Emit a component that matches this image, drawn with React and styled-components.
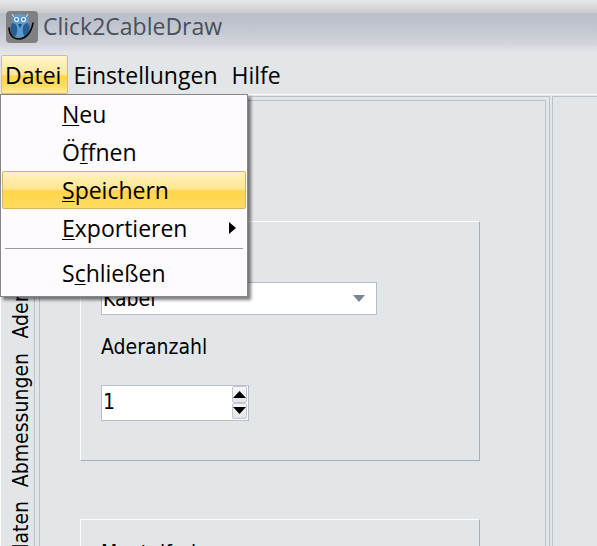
import styled, { createGlobalStyle } from 'styled-components';

const GlobalStyle = createGlobalStyle`
    * {
        box-sizing: border-box;
    }
    body {
        margin: 0;
        background-color: #e2e6e9;
        color: #000;
        overflow: hidden;
    }
    button, input, select {
        font: inherit;
        color: inherit;
    }
`;
const Window = styled.div`
    height: 100vh;
    display: flex;
    flex-direction: column;
    overflow: hidden;
    font-family: "DejaVu Sans Condensed", "DejaVu Sans", sans-serif;
    font-size: 21px;
    line-height: 24px;
`;
const TitleBar = styled.header`
    flex: none;
    height: 55px;
    padding: 0 6px 2px;
    display: flex;
    align-items: center;
    gap: 5px;
    background: linear-gradient(#e6e8e9 0, #c8cacd 13px, #b9bfca 14px, #bec3cd 24px, #d3d6dc 45px, #e2e6e9 52px);
`;
const Title = styled.h1`
    margin: 0;
    padding-bottom: 2px;
    font-family: "Open Sans", "Noto Sans", sans-serif;
    font-size: 23px;
    font-weight: 400;
    line-height: 32px;
    color: #4a505c;
`;
const MenuBar = styled.nav`
    flex: none;
    position: relative;
    display: flex;
    height: 40px;
    padding-left: 1px;
    border-bottom: 1px solid #fbfcfd;
    font-family: "Open Sans", "Noto Sans", sans-serif;
    font-size: 23px;
    font-variant-ligatures: none;
    line-height: 32px;
`;
const MenuButton = styled.button`
    height: 39px;
    padding: 0 8px 0 4px;
    white-space: nowrap;
    border: 1px solid ${props => props.$open ? '#d9bd78' : 'transparent'};
    border-radius: 2px;
    background: ${props => props.$open
        ? 'linear-gradient(#fff5cf, #ffe794 50%, #ffd546 55%, #ffdc62 80%, #ffeb9c)'
        : 'none'};
    &:first-child {
        padding: 0 6px 0 3px;
    }
`;
const Menu = styled.ul`
    position: absolute;
    top: 39px;
    left: 0;
    z-index: 1;
    width: 248px;
    margin: 0;
    padding: 0 1px 4px;
    list-style: none;
    background-color: #fefbff;
    border: 1px solid #86868a;
    box-shadow: 3px 3px 3px rgba(0, 0, 0, 0.5);
`;
const MenuItem = styled.button`
    display: flex;
    align-items: center;
    justify-content: space-between;
    width: 100%;
    height: 38px;
    padding: 0 8px 0 59px;
    text-align: left;
    border: 1px solid ${props => props.$active ? '#d3b368' : 'transparent'};
    border-radius: 2px;
    background: ${props => props.$active
        ? 'linear-gradient(#fff2bd, #ffe691 48%, #ffd54a 52%, #ffdb60)'
        : 'none'};
`;
const Separator = styled.li`
    height: 1px;
    margin: 1px 3px 5px;
    background-color: #9a9a9e;
`;
const Key = styled.span`
    text-decoration: underline;
    text-decoration-thickness: 1px;
    text-underline-offset: 2px;
    text-decoration-skip-ink: none;
`;
const Workspace = styled.main`
    flex: 1;
    min-height: 0;
    display: grid;
    grid-template-columns: 33px minmax(0, 1fr) 45px;
    border-left: 1px solid #fbfcfd;
`;
const Tabs = styled.div`
    display: flex;
    flex-direction: column;
    align-items: center;
    gap: 14px;
    padding: 188px 0 0 6px;
`;
const Tab = styled.button`
    flex: none;
    padding: 0;
    border: none;
    background: none;
    white-space: nowrap;
    writing-mode: vertical-rl;
    transform: rotate(180deg);
`;
const Panel = styled.section`
    margin-top: 1px;
    margin-right: 2px;
    padding: 3px 3px 0 4px;
    border: 1px solid #bbc0c9;
    border-bottom: none;
`;
const Page = styled.div`
    height: 100%;
    padding: 120px 65px 0 40px;
    border: 1px solid #bbc0c9;
    border-bottom: none;
`;
const SidePanel = styled.aside`
    margin-top: 1px;
    border-top: 1px solid #bbc0c9;
    border-left: 1px solid #bbc0c9;
`;
const Group = styled.div`
    display: flex;
    flex-direction: column;
    align-items: flex-start;
    height: 240px;
    margin-bottom: 58px;
    padding: 21px 20px 0;
    border: 1px solid;
    border-color: #fbfcfd #a9aeb5 #a9aeb5 #fbfcfd;
`;
const Label = styled.label`
    min-height: 24px;
    margin-bottom: ${props => props.$gap || 0}px;
`;
const SelectBox = styled.div`
    display: grid;
    align-items: center;
    width: 276px;
    max-width: 100%;
    margin-bottom: 20px;
    & > * {
        grid-area: 1 / 1;
    }
    & > svg {
        justify-self: end;
        margin-right: 12px;
        pointer-events: none;
    }
`;
const Select = styled.select`
    appearance: none;
    width: 100%;
    height: 33px;
    padding: 0 1px;
    border: 1px solid #b7bdc8;
    border-radius: 0;
    background-color: #fff;
`;
const Spinner = styled.div`
    display: flex;
    width: 148px;
    height: 36px;
    padding-right: 1px;
    border: 1px solid #b7bdc8;
    background-color: #fff;
`;
const SpinnerInput = styled.input`
    flex: 1;
    min-width: 0;
    padding: 0 1px 2px;
    border: none;
    background: none;
`;
const Steps = styled.div`
    display: flex;
    flex-direction: column;
    width: 15px;
    padding-bottom: 1px;
`;
const Step = styled.button`
    flex: 1;
    display: flex;
    align-items: center;
    justify-content: center;
    padding: 0;
    border: 1px solid #c3c7cf;
    border-radius: 2px;
    background: linear-gradient(#f4f5f7, #e4e6ea);
`;

const Logo = () => (
    <svg width="32" height="32" viewBox="0 0 32 32" aria-hidden="true">
        <rect width="32" height="32" rx="4" fill="#7f8081" />
        <path d="M6 3l4 1q4-2 8 0l4-1q0 4 0 7l1 4q1 11-9 13q-9-2-8-13l1-4q-1-3-1-7z" fill="#5a9bd0" />
        <path d="M6 12q-4 7 2 14q4-2 3-10q-1-4-5-4zM22 12q4 7-2 14q-4-2-3-10q1-4 5-4z" fill="#285e91" />
        <path d="M6 3l2 3M22 3l-2 3" stroke="#cfe5f3" strokeWidth="1" />
        <circle cx="10.500" cy="8.500" r="1.900" fill="#2f6ea6" stroke="#eaf4fa" strokeWidth="1.300" />
        <circle cx="17.500" cy="8.500" r="1.900" fill="#2f6ea6" stroke="#eaf4fa" strokeWidth="1.300" />
        <path d="M12 13h4l-2 4z" fill="#214e79" />
        <path d="M3 17q1 11 10 11q11-1 14-16" fill="none" stroke="#08090c" strokeWidth="1.600" strokeLinecap="round" />
    </svg>
);

const App = () => {
  return (
    <Window>
        <GlobalStyle />
        <TitleBar>
            <Logo />
            <Title>Click2CableDraw</Title>
        </TitleBar>
        <MenuBar>
            <MenuButton $open>Datei</MenuButton>
            <MenuButton>Einstellungen</MenuButton>
            <MenuButton>Hilfe</MenuButton>
            <Menu>
                <li><MenuItem><span><Key>N</Key>eu</span></MenuItem></li>
                <li><MenuItem><span>Ö<Key>f</Key>fnen</span></MenuItem></li>
                <li><MenuItem $active><span><Key>S</Key>peichern</span></MenuItem></li>
                <li>
                    <MenuItem>
                        <span><Key>E</Key>xportieren</span>
                        <svg width="8" height="14" aria-hidden="true"><path d="M0 1l7 6l-7 6z" /></svg>
                    </MenuItem>
                </li>
                <Separator role="separator" />
                <li><MenuItem><span>S<Key>c</Key>hließen</span></MenuItem></li>
            </Menu>
        </MenuBar>
        <Workspace>
            <Tabs>
                <Tab>Adern</Tab>
                <Tab>Abmessungen</Tab>
                <Tab>Stammdaten</Tab>
            </Tabs>
            <Panel>
                <Page>
                    <Group>
                        <Label as="div" $gap={15} />
                        <SelectBox>
                            <Select aria-label="Typ">
                                <option>Kabel</option>
                            </Select>
                            <svg width="12" height="7" aria-hidden="true"><path d="M0 0h12l-6 7z" fill="#7d8493" /></svg>
                        </SelectBox>
                        <Label htmlFor="anzahl" $gap={26}>Aderanzahl</Label>
                        <Spinner>
                            <SpinnerInput id="anzahl" defaultValue="1" />
                            <Steps>
                                <Step aria-label="Mehr">
                                    <svg width="13" height="7" aria-hidden="true"><path d="M0 7h13l-6.500-7z" /></svg>
                                </Step>
                                <Step aria-label="Weniger">
                                    <svg width="13" height="7" aria-hidden="true"><path d="M0 0h13l-6.500 7z" /></svg>
                                </Step>
                            </Steps>
                        </Spinner>
                    </Group>
                    <Group>
                        <Label as="div">Mantelfarbe</Label>
                    </Group>
                </Page>
            </Panel>
            <SidePanel />
        </Workspace>
    </Window>
  )
};

export default App;
